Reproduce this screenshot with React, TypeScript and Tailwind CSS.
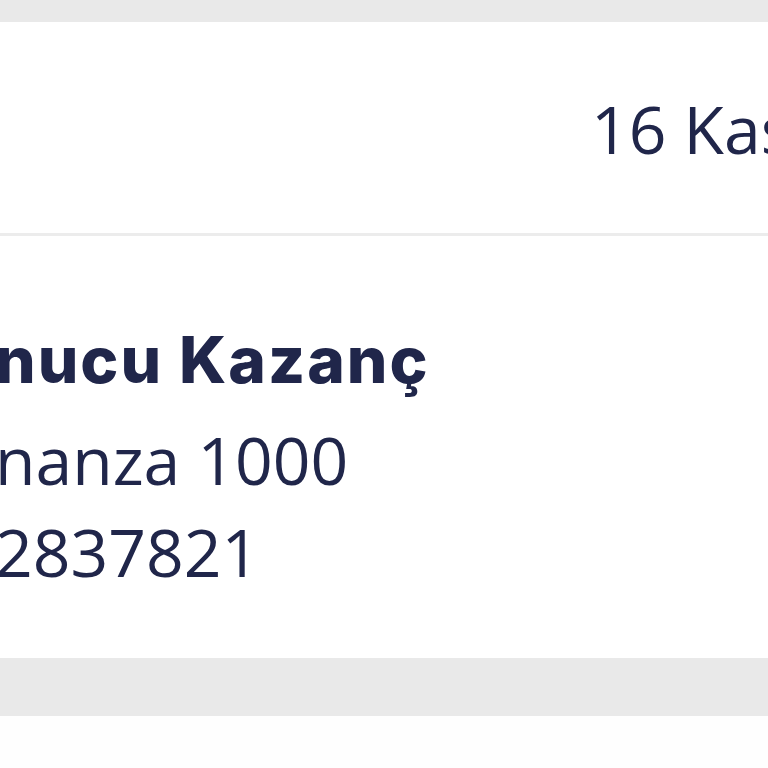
import React from 'react';

const ink = 'text-[#20264a]';

export default function App() {
  return (
    <div className="w-[768px] h-[768px] overflow-hidden bg-[#fefefe] font-['Open_Sans',sans-serif]">
      <div className="h-[22px] bg-[#e9e9e9]" />

      {/* date header row */}
      <div className="h-[211px] bg-white flex items-center overflow-hidden">
        <span className={`pl-[591px] whitespace-nowrap text-[66px] leading-[92px] ${ink}`}>
          16 Kasım 2024
        </span>
      </div>

      <div className="h-[3px] bg-[#ececec]" />

      {/* transaction detail */}
      <div className="h-[422px] bg-white pt-[92px] overflow-hidden">
        <div className="flex flex-col -ml-[5px] whitespace-nowrap">
          <span className={`font-['Inter',sans-serif] font-extrabold tracking-[2px] text-[64px] leading-[64px] ${ink}`}>
            nucu Kazanç
          </span>
          <span className={`mt-[21px] text-[66px] leading-[92px] ${ink}`}>nanza 1000</span>
          <span className={`text-[66px] leading-[92px] ${ink}`}>2837821</span>
        </div>
      </div>

      <div className="h-[58px] bg-[#e9e9e9]" />
    </div>
  );
}
